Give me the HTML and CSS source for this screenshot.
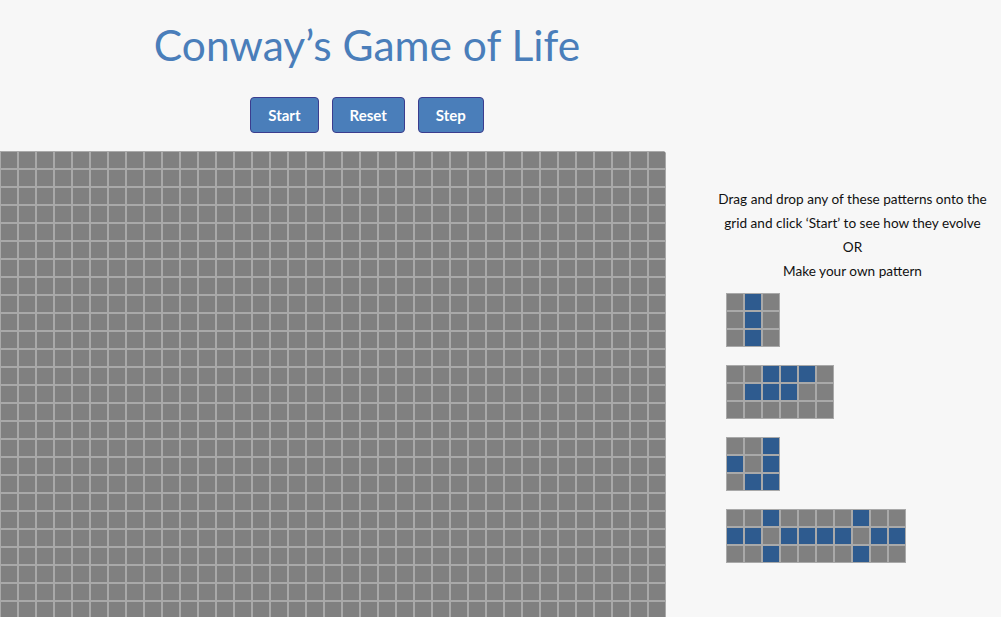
FILE: index.html
```html
<!DOCTYPE html>
<html lang="en">
<head>
<meta charset="utf-8">
<title>Conway's Game of Life</title>
<link rel="stylesheet" href="styles.css">
</head>
<body>
<header class="header">
  <h1 class="title">Conway’s Game of Life</h1>
  <div class="controls">
    <button class="btn btn-start">Start</button>
    <button class="btn btn-reset">Reset</button>
    <button class="btn btn-step">Step</button>
  </div>
</header>
<main class="main">
  <div class="board" id="board"></div>
  <aside class="aside">
    <p class="intro">Drag and drop any of these patterns onto the<br>grid and click ‘Start’ to see how they evolve<br>OR<br>Make your own pattern</p>
    <div class="patterns">
      <div class="pattern" data-cols="3" data-live="1,4,7"></div>
      <div class="pattern" data-cols="6" data-live="2,3,4,7,8,9"></div>
      <div class="pattern" data-cols="3" data-live="2,3,5,7,8"></div>
      <div class="pattern" data-cols="10" data-live="2,7,10,11,13,14,15,16,18,19,22,27"></div>
    </div>
  </aside>
</main>
<script src="script.js"></script>
</body>
</html>
```

FILE: styles.css
```css
html, body {
  margin: 0;
  padding: 0;
  height: 100%;
  overflow: hidden;
}
body {
  background: #f7f7f7;
  font-family: Lato, "Open Sans", sans-serif;
  color: #111;
}
.header {
  width: 734px;
  text-align: center;
  padding-top: 15px;
}
.title {
  margin: 0;
  font-family: Lato, "Open Sans", sans-serif;
  font-weight: 400;
  font-size: 42.5px;
  line-height: 60px;
  color: #4a7eba;
}
.controls {
  display: flex;
  justify-content: center;
  gap: 13px;
  margin-top: 22px;
}
.btn {
  height: 36px;
  padding: 0 17px;
  border: 1px solid #3b3d8e;
  border-radius: 4px;
  background: #4a7eba;
  color: #fff;
  font-family: Lato, "Open Sans", sans-serif;
  font-size: 15px;
  font-weight: 700;
  cursor: pointer;
}
.main {
  display: flex;
  margin-top: 18px;
}
.board {
  display: grid;
  grid-template-columns: repeat(37, 18px);
  grid-auto-rows: 18px;
  width: 666px;
  border-top-right-radius: 4px;
  overflow: hidden;
  flex: none;
}
.cell {
  box-sizing: border-box;
  width: 18px;
  height: 18px;
  border: 1px solid #a9a9a9;
  background: #808080;
}
.cell.live {
  background: #2e5b8f;
}
.aside {
  width: 297px;
  margin-left: 38px;
  padding-top: 36px;
}
.intro {
  margin: 0;
  text-align: center;
  font-size: 13.6px;
  line-height: 24px;
}
.patterns {
  margin-top: 10px;
  padding-left: 22px;
  display: flex;
  flex-direction: column;
  align-items: flex-start;
  gap: 18px;
}
.pattern {
  display: grid;
  grid-auto-rows: 18px;
}
```

FILE: script.js
```js
(function () {
  var board = document.getElementById('board');
  var html = '';
  for (var i = 0; i < 37 * 26; i++) {
    html += '<div class="cell"></div>';
  }
  board.innerHTML = html;

  var patterns = document.querySelectorAll('.pattern');
  patterns.forEach(function (p) {
    var cols = parseInt(p.getAttribute('data-cols'), 10);
    var live = p.getAttribute('data-live').split(',').map(Number);
    p.style.gridTemplateColumns = 'repeat(' + cols + ', 18px)';
    var out = '';
    for (var i = 0; i < cols * 3; i++) {
      out += '<div class="cell' + (live.indexOf(i) >= 0 ? ' live' : '') + '"></div>';
    }
    p.innerHTML = out;
  });
})();
```
